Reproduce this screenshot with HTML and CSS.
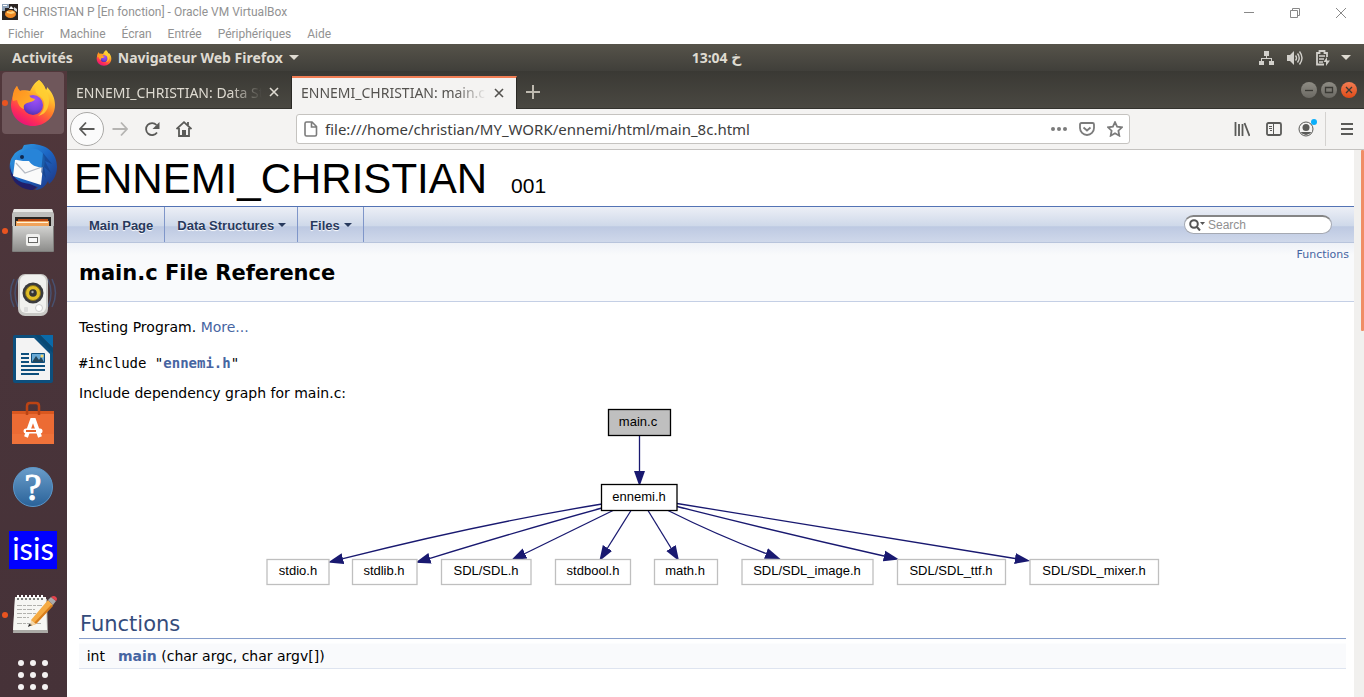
FILE: index.html
```html
<!DOCTYPE html>
<html lang="fr">
<head>
<meta charset="utf-8">
<title>CHRISTIAN P [En fonction] - Oracle VM VirtualBox</title>
<link rel="stylesheet" href="styles.css">
</head>
<body>
<svg class="defs" width="0" height="0" aria-hidden="true">
  <defs>
    <linearGradient id="ffBody" x1="0.85" y1="0" x2="0.3" y2="1">
      <stop offset="0" stop-color="#fff14a"/><stop offset="0.3" stop-color="#ffc02e"/><stop offset="0.55" stop-color="#ff7a2a"/><stop offset="0.8" stop-color="#ff2f55"/><stop offset="1" stop-color="#e5127c"/>
    </linearGradient>
    <radialGradient id="ffGlobe" cx="0.6" cy="0.2" r="0.9">
      <stop offset="0" stop-color="#a050f5"/><stop offset="0.6" stop-color="#7542dd"/><stop offset="1" stop-color="#4b2b9c"/>
    </radialGradient>
    <linearGradient id="ffHead" x1="0" y1="0" x2="1" y2="1">
      <stop offset="0" stop-color="#ff8a1e"/><stop offset="1" stop-color="#ffb52a"/>
    </linearGradient>
    <symbol id="firefox" viewBox="0 0 48 48">
      <path fill="url(#ffBody)" d="M30 1c5 4 6 8 7 10 1-1 1-2 1-3 5 5 8 11 8 18 0 12-10 21-22 21S2 38 2 26c0-5 2-9 3-12 0-2 1-5 3-7 1 3 2 4 3 5 3-1 7-1 10 0 2-4 5-9 9-11z"/>
      <circle cx="24" cy="26" r="10" fill="url(#ffGlobe)"/>
      <path fill="url(#ffHead)" d="M8 7c1 3 2 4 3 5 4-1 7 0 9 2 0 3 1 5 6 6-1 3-6 3-8 4-3 1-4 3-3 6-4-1-6-5-7-9l-4 1c-1-4 0-11 4-15z"/>
      <path fill="#ffcf32" d="M30 1c5 4 6 8 7 10 3 5 4 11 2 17-2 6-6 8-10 9 5-4 7-9 6-14-1-4-4-6-7-8-3-4-2-10 2-14z" opacity=".85"/>
    </symbol>
  </defs>
</svg>

<header class="host">
  <div class="host-title">
    <svg class="host-icon" viewBox="0 0 16 16" aria-hidden="true"><rect width="16" height="16" fill="#2a2421"/><path fill="#8fa2b8" d="M0 0h7v4H3v3H0z"/><path fill="#fff" d="M1 1h4v1H1zM7 5l2-3 3 3z"/><ellipse cx="8.500" cy="10" rx="5.500" ry="4" fill="#f08a24"/><path fill="#ffd27a" d="M5 7l3 1 3-1 2 2-4 1-4-1z"/><path fill="#d9dce0" d="M12 3l3 2v3l-3-2z"/></svg>
    <span class="host-name">CHRISTIAN P [En fonction] - Oracle VM VirtualBox</span>
    <div class="host-controls">
      <button aria-label="Réduire"><svg viewBox="0 0 12 12"><path d="M1 5.500h10"/></svg></button>
      <button aria-label="Restaurer"><svg viewBox="0 0 12 12"><path d="M1.500 3.500h7v7h-7zM3.500 3V1.500h7v7H9"/></svg></button>
      <button aria-label="Fermer"><svg viewBox="0 0 12 12"><path d="M1 1l10 10M11 1L1 11"/></svg></button>
    </div>
  </div>
  <nav class="host-menu">
    <button>Fichier</button><button>Machine</button><button>Écran</button><button>Entrée</button><button>Périphériques</button><button>Aide</button>
  </nav>
</header>

<div class="panel">
  <div class="panel-left">
    <button>Activités</button>
    <button class="app-menu"><svg class="app-icon" aria-hidden="true"><use href="#firefox"/></svg>Navigateur Web Firefox<i class="caret"></i></button>
  </div>
  <button class="clock">13:04 <span dir="rtl">خ</span></button>
  <button class="status" aria-label="Système">
    <svg width="16" height="16" viewBox="0 0 16 16"><path fill="#d2d0cb" d="M5 1h5v5H5zM0 11h5v4H0zM10 11h5v4h-5zM7 6h1v2h5v3h-1V9H3v2H2V8h5z"/></svg>
    <svg width="16" height="16" viewBox="0 0 16 16"><path fill="#d2d0cb" d="M0 5h3l4-4v14l-4-4H0z"/><path fill="none" stroke="#d2d0cb" stroke-width="1.400" d="M8.500 5.500q2 2.500 0 5M10.500 3.500q3.500 4.500 0 9M12.500 1.500q5 6.500 0 13"/></svg>
    <svg width="16" height="16" viewBox="0 0 16 16"><path fill="none" stroke="#d2d0cb" stroke-width="1.800" d="M9 14.500H2V3h2.500V1h5v2H12v4"/><path stroke="#d2d0cb" stroke-width="1.500" d="M4 6h6M4 9h5M4 12h4"/><path fill="#d2d0cb" d="M12 7l-3.500 5H11v4l4-5.500h-3z"/></svg>
    <i class="caret"></i>
  </button>
</div>

<div class="desktop">
  <nav class="dock" aria-label="Applications">
    <button class="active running" aria-label="Firefox"><svg viewBox="0 0 48 48"><use href="#firefox"/></svg></button>
    <button aria-label="Thunderbird"><svg viewBox="0 0 48 48">
      <defs><linearGradient id="tb" x1="0" y1="0" x2="1" y2="1"><stop offset="0" stop-color="#35a6e8"/><stop offset=".5" stop-color="#1c66c4"/><stop offset="1" stop-color="#20307c"/></linearGradient></defs>
      <path fill="url(#tb)" d="M15 2l7-1C38 1 48 10 48 24c0 8-4 14-8 17l-1-3c-2 5-7 9-13 9l3-3C20 46 10 44 5 37 0 31-1 19 4 13c2-4 6-6 9-7z"/>
      <path fill="#211f69" d="M1 21c0 12 8 19 20 20l7 3-4 3C10 47-1 36 1 21z"/>
      <path fill="#fafafa" d="M6 17l20-2 8 9-2 18L4 33z"/>
      <path fill="none" stroke="#b5bac3" stroke-width="1.200" d="M7 20l9 10 17-6"/>
      <path fill="#2784d8" d="M8 17c2-9 14-15 23-9 6 4 5 10 4 16-6 1-12-1-15-6-4 0-8 0-12-1z"/>
      <path fill="#123c82" d="M34 10l9 11-7-3 6 12-7-6 2 11-5-6z" opacity=".55"/><circle cx="13" cy="14" r="2" fill="#10294e"/>
    </svg></button>
    <button class="running" aria-label="Fichiers"><svg viewBox="0 0 48 48">
      <defs><linearGradient id="cab" x2="0" y2="1"><stop offset="0" stop-color="#d2d2d0"/><stop offset="1" stop-color="#8d8d8b"/></linearGradient></defs>
      <path fill="#bebebc" d="M5 2h38l2 5v37H3V7z"/><path fill="#e8e8e6" d="M5 2h38l1 3H4z"/><path fill="#292522" d="M6 10h36v9H6z"/><path fill="#b84a16" d="M9 12h30v3H9z"/><path fill="#f1a35a" d="M7 14h33v5H7z"/><path fill="#fff2d8" d="M8 15h31v1H8z"/><path fill="url(#cab)" d="M4 19h40v25H4z"/><path fill="none" stroke="#7e7e7c" d="M3.500 19v25.500h41V19"/><rect x="17" y="27" width="14" height="12" rx="2" fill="#f0f0ee"/><rect x="19.500" y="30.500" width="9" height="5" fill="#f8f8f8" stroke="#686866"/>
    </svg></button>
    <button aria-label="Rhythmbox"><svg viewBox="0 0 48 48">
      <path fill="none" stroke="#46618e" stroke-width="1.500" opacity=".65" d="M9 8q-6 14 0 28M5 8q-7 14 0 28M39 8q6 14 0 28M43 8q7 14 0 28"/>
      <rect x="9" y="3" width="30" height="42" rx="7" fill="#c9c9c6"/><rect x="11" y="4" width="26" height="38" rx="6" fill="#f1f1ef"/><circle cx="24" cy="22" r="10.500" fill="#3b3b3e"/><circle cx="24" cy="22" r="7.500" fill="#e2be26" stroke="#84701a"/><circle cx="24" cy="22" r="3.800" fill="#353535"/><circle cx="23.500" cy="21" r="1.200" fill="#aaa"/><circle cx="30" cy="37" r="3.500" fill="#fff" stroke="#ccc"/><rect x="15" y="36" width="4" height="5" rx="1" fill="#ddd"/>
    </svg></button>
    <button aria-label="LibreOffice Writer"><svg viewBox="0 0 48 48">
      <path fill="#0d4f7d" d="M6 0h21l17 17v29q0 2-2 2H6q-2 0-2-2V2q0-2 2-2z"/><path fill="#f3f3f3" d="M7 3h18l16 16v26H7z"/><path fill="#0a6aa9" d="M31 0h13v13z"/><path fill="#074975" d="M31 0l13 13v5L26 0z"/><path stroke="#0d4f7d" stroke-width="2" d="M12 19h8M12 23h8M12 27h8M12 31h24M12 35h24M12 39h18"/><path fill="#69a9d4" stroke="#0d4f7d" d="M22.500 18.500h13v9h-13z"/><path fill="#25475c" d="M23 27l4-6 3 4 2-3 3 5z"/><circle cx="33" cy="21" r="1.500" fill="#f6d564"/>
    </svg></button>
    <button aria-label="Logiciels Ubuntu"><svg viewBox="0 0 48 48">
      <path fill="#ec6b34" d="M3 12h42v33H3z"/><path fill="#d9571f" d="M3 12h42v3H3z"/><path fill="#f2793f" d="M3 35h42v10H3z" opacity=".5"/><path fill="none" stroke="#bb4314" stroke-width="2.500" d="M18 16V7q0-3 3-3h6q3 0 3 3v9"/><path fill="none" stroke="#fff" stroke-width="4" d="M17 38l6-17h2l6 17"/><path stroke="#fff" stroke-width="5" stroke-linecap="round" d="M17 32h14"/><path stroke="#e4632d" stroke-width="2" d="M17 32h10"/>
    </svg></button>
    <button aria-label="Aide"><svg viewBox="0 0 48 48">
      <defs><linearGradient id="help" x2="0" y2="1"><stop offset="0" stop-color="#6a9dca"/><stop offset="1" stop-color="#2a6299"/></linearGradient></defs>
      <circle cx="24" cy="24" r="19.500" fill="url(#help)" stroke="#5b97ca"/><text class="help-mark" x="24" y="37" text-anchor="middle">?</text>
    </svg></button>
    <button aria-label="ISIS"><svg viewBox="0 0 48 48"><path fill="#00f" d="M0 4h48v38H0z"/><text class="isis-mark" x="24" y="33" text-anchor="middle">isis</text></svg></button>
    <button class="running" aria-label="Éditeur de texte"><svg viewBox="0 0 48 48">
      <path fill="#aaa9a5" d="M6 8h32l1 34H4z"/><path fill="#f6f6f3" d="M6 6h31l1 33H4z"/><path stroke="#b1b1ad" stroke-width="1" stroke-dasharray="5 1 3 1" d="M8 14.500h25M8 18.500h18M8 22.500h20M8 26.500h12M8 32.500h24"/><path stroke="#4d4d4b" stroke-width="1.500" stroke-dasharray="2 2" d="M8 8h28"/><path stroke="#fff" stroke-width="3" stroke-dasharray="2 2" d="M8 5.500h28"/><path fill="#f5ab43" d="M22 29L39 9l5 5-17 19-5 2z"/><path fill="#d67c1c" d="M25 32l17-18 2 1-17 18z"/><path fill="#f2d6aa" d="M22 29l5 4-6 2z"/><path fill="#222" d="M20 33l3 1-4 2z"/><path fill="#aaa" d="M39 9l3-3 5 4-3 4z"/><path fill="#e3434c" d="M42 6q3-2 5 0t0 4z"/>
    </svg></button>
    <button class="apps" aria-label="Afficher les applications"><svg viewBox="0 0 48 48"><g fill="#f4f1f2"><circle cx="12" cy="12" r="3"/><circle cx="24" cy="12" r="3"/><circle cx="36" cy="12" r="3"/><circle cx="12" cy="24" r="3"/><circle cx="24" cy="24" r="3"/><circle cx="36" cy="24" r="3"/><circle cx="12" cy="36" r="3"/><circle cx="24" cy="36" r="3"/><circle cx="36" cy="36" r="3"/></g></svg></button>
  </nav>

  <main class="browser">
    <div class="tabs">
      <div class="tab"><button class="tab-label">ENNEMI_CHRISTIAN: Data Structures</button><button class="tab-close" aria-label="Fermer l’onglet"><svg viewBox="0 0 10 10"><path d="M1 1l8 8M9 1L1 9"/></svg></button></div>
      <div class="tab selected"><button class="tab-label">ENNEMI_CHRISTIAN: main.c File Reference</button><button class="tab-close" aria-label="Fermer l’onglet"><svg viewBox="0 0 10 10"><path d="M1 1l8 8M9 1L1 9"/></svg></button></div>
      <button class="new-tab" aria-label="Nouvel onglet"><svg viewBox="0 0 14 14"><path d="M7 0v14M0 7h14"/></svg></button>
      <div class="window-controls">
        <button aria-label="Réduire"><svg viewBox="0 0 16 16"><path d="M4 8.500h8"/></svg></button>
        <button aria-label="Agrandir"><svg viewBox="0 0 16 16"><path d="M4.500 5.500h7v5h-7z"/></svg></button>
        <button class="close" aria-label="Fermer"><svg viewBox="0 0 16 16"><path d="M5 5l6 6M11 5l-6 6"/></svg></button>
      </div>
    </div>

    <div class="toolbar">
      <div class="tools history">
        <button class="back" aria-label="Précédent"><svg viewBox="0 0 16 16"><path d="M15.500 8H1M7 1.500L1 8l6 6.500"/></svg></button>
        <button class="forward" aria-label="Suivant"><svg viewBox="0 0 16 16"><path d="M0.500 8H15M9 1.500L15 8l-6 6.500"/></svg></button>
        <button aria-label="Actualiser"><svg viewBox="0 0 16 16"><path d="M13 11.500A6 6 0 1 1 12.500 4"/><path class="solid" d="M15.500 1v7h-7z"/></svg></button>
        <button aria-label="Accueil"><svg viewBox="0 0 16 16"><path d="M0.500 8L8 1.200 15.500 8M3 7v8h10V7M12 1v3"/><path class="solid" d="M6 9h4v6H6z"/></svg></button>
      </div>
      <div class="address">
        <svg class="page-icon" viewBox="0 0 16 16" aria-hidden="true"><path d="M3.500 1h5.500l4.500 4.500v8q0 1.500-1.500 1.500H3.500Q2 15 2 13.500v-11Q2 1 3.500 1zM8.500 1v5h5"/></svg>
        <input aria-label="Adresse" value="file:///home/christian/MY_WORK/ennemi/html/main_8c.html">
        <button aria-label="Actions"><svg viewBox="0 0 16 16"><g class="solid"><circle cx="2" cy="8" r="2"/><circle cx="8" cy="8" r="2"/><circle cx="14" cy="8" r="2"/></g></svg></button>
        <button aria-label="Pocket"><svg viewBox="0 0 16 16"><path d="M2.500 2h11Q15 2 15 3.500V7a7 7 0 0 1-14 0V3.500Q1 2 2.500 2zM4.500 6.500L8 9.500l3.500-3"/></svg></button>
        <button aria-label="Marque-page"><svg viewBox="0 0 16 16"><path d="M8 1.200l2.100 4.500 4.900.6-3.600 3.400.9 5L8 12.300l-4.300 2.400.9-5L1 6.300l4.900-.6z"/></svg></button>
      </div>
      <div class="tools extras">
        <button aria-label="Bibliothèque"><svg viewBox="0 0 16 16"><path d="M1.500 1v14M5 3v12M8.500 3v12M10.500 2l5 13"/></svg></button>
        <button aria-label="Panneaux"><svg viewBox="0 0 16 16"><path d="M2.500 2h11Q15 2 15 3.500v9q0 1.500-1.500 1.500h-11Q1 14 1 12.500v-9Q1 2 2.500 2z"/><path class="thin" d="M7.500 2v12M3 5.500h3M3 7.500h3M4 9.500h2"/></svg></button>
        <button class="account" aria-label="Compte"><svg viewBox="0 0 16 16"><circle class="thin" cx="8" cy="8" r="7"/><circle class="solid" cx="8" cy="6.500" r="3.500"/><path class="solid" d="M2.500 11h11Q11 14 8 14t-5.500-3z"/></svg></button>
      </div>
      <button class="hamburger" aria-label="Menu"><svg viewBox="0 0 16 16"><path d="M2 3h12M2 8h12M2 13h12"/></svg></button>
    </div>

    <div class="viewport">
      <article class="doc">
        <div class="project"><span class="project-name">ENNEMI_CHRISTIAN</span><span class="project-number">001</span></div>
        <nav class="doc-nav">
          <a href="#main">Main Page</a><a href="#data">Data Structures<i class="caret"></i></a><a href="#files">Files<i class="caret"></i></a>
          <label class="search"><svg viewBox="0 0 16 12" aria-hidden="true"><circle cx="5" cy="5" r="3.800"/><path d="M8 8l3 3.500"/><path class="tip" d="M11 3h5l-2.500 3z"/></svg><input type="text" placeholder="Search" aria-label="Search"></label>
        </nav>
        <header class="doc-head">
          <a class="summary" href="#functions">Functions</a>
          <h1>main.c File Reference</h1>
        </header>
        <section class="contents">
          <p class="brief">Testing Program. <a href="#details">More...</a></p>
          <code class="include">#include "<a href="#ennemi">ennemi.h</a>"</code>
          <p class="caption">Include dependency graph for main.c:</p>
          <svg class="graph" width="901" height="182" viewBox="0 0 901 182" role="img" aria-label="Include dependency graph">
            <defs><marker id="arrow" markerUnits="userSpaceOnUse" markerWidth="16" markerHeight="12" refX="0" refY="6" orient="auto"><path fill="#191970" d="M0 .5L15.500 6 0 11.500z"/></marker></defs>
            <g class="edges">
              <path d="M377.500 30v35"/>
              <path d="M340 98Q218 118 81 152.700"/>
              <path d="M340 102Q267 122 168 152.300"/>
              <path d="M351 104.500L263 147.500"/>
              <path d="M369 104.500L345.500 142"/>
              <path d="M386 104.500L409 142"/>
              <path d="M406 104.500Q455 129 504 147.500"/>
              <path d="M415 100.500Q520 127 622 150"/>
              <path d="M415 97.500Q590 126 753 152.500"/>
            </g>
            <g class="nodes">
              <rect class="root" x="346.500" y="3.500" width="62" height="26"/><rect class="linked" x="339.500" y="78.500" width="75.500" height="26"/>
              <rect x="5" y="153.500" width="62" height="25"/><rect x="90.500" y="153.500" width="64.500" height="25"/><rect x="179.500" y="153.500" width="89.500" height="25"/><rect x="293.500" y="153.500" width="75" height="25"/><rect x="392.500" y="153.500" width="63" height="25"/><rect x="480" y="153.500" width="131" height="25"/><rect x="635.500" y="153.500" width="108" height="25"/><rect x="768" y="153.500" width="128.500" height="25"/>
            </g>
            <g class="labels">
              <text x="376" y="20">main.c</text><text x="377" y="95">ennemi.h</text>
              <text x="36" y="169">stdio.h</text><text x="122" y="169">stdlib.h</text><text x="224" y="169">SDL/SDL.h</text><text x="331" y="169">stdbool.h</text><text x="423" y="169">math.h</text><text x="545" y="169">SDL/SDL_image.h</text><text x="689" y="169">SDL/SDL_ttf.h</text><text x="832" y="169">SDL/SDL_mixer.h</text>
            </g>
          </svg>
          <table class="members" id="functions">
            <thead><tr><th colspan="2"><h2>Functions</h2></th></tr></thead>
            <tbody><tr><td class="type">int</td><td><a href="#main">main</a> (char argc, char argv[])</td></tr></tbody>
          </table>
        </section>
      </article>
      <div class="scrollbar"><div class="thumb"></div></div>
    </div>
  </main>
</div>
</body>
</html>
```
FILE: styles.css
```css
* { box-sizing: border-box; }
html, body { height: 100%; }
body { margin: 0; display: flex; flex-direction: column; overflow: hidden; background: #fff; font-family: "Noto Sans", "DejaVu Sans", sans-serif; }
button { border: 0; padding: 0; margin: 0; background: none; color: inherit; font: inherit; }
input { border: 0; padding: 0; background: none; font: inherit; outline: 0; min-width: 0; }
a { color: #4665a2; text-decoration: none; }
.defs { position: absolute; }
.caret { display: inline-block; border: 5px solid transparent; border-top-color: currentColor; border-bottom: 0; }

/* Host window */
.host { color: #929292; font: 12px/22px "Roboto", sans-serif; height: 44px; flex: none; }
.host-title { display: flex; align-items: center; height: 23px; padding: 0 17px 0 2px; gap: 5px; }
.host-icon { width: 16px; height: 16px; }
.host-controls { margin-left: auto; display: flex; gap: 34px; }
.host-controls button { width: 12px; height: 20px; }
.host-controls svg { display: block; width: 12px; height: 12px; margin-top: 3px; fill: none; stroke: #888; }
.host-menu { display: flex; gap: 16px; padding-left: 8px; }

/* GNOME panel */
.panel { display: grid; grid-template-columns: 1fr auto 1fr; align-items: center; flex: none; height: 27px; padding: 0 13px 0 12px; background: linear-gradient(#56534a, #403f3a); color: #dfdbd2; font-size: 14px; font-weight: 700; }
.panel-left { display: flex; gap: 23px; }
.app-menu { display: flex; align-items: center; gap: 6px; }
.app-icon { width: 16px; height: 16px; }
.clock { padding-left: 70px; }
.status { display: flex; align-items: center; justify-content: flex-end; gap: 12px; }
.status .caret { margin-left: -2px; }

.desktop { display: flex; flex: 1; min-height: 0; }

/* Dock */
.dock { flex: none; width: 67px; padding: 1px 3px 0 2px; display: flex; flex-direction: column; gap: 2px; overflow: hidden; background: linear-gradient(#51373b, #49343a 45%, #463238); }
.dock button { position: relative; flex: none; height: 62px; border-radius: 4px; }
.dock svg { display: block; width: 48px; height: 48px; margin: 0 auto; }
.dock .active { background: #6f575b; }
.dock .running::before { content: ""; position: absolute; left: 0; top: 28px; width: 6px; height: 6px; border-radius: 50%; background: #e95420; }
.dock .apps { height: 54px; }
.help-mark { font: 38px "Liberation Serif", serif; fill: #fff; stroke: #fff; }
.isis-mark { font: 31px "Lato", sans-serif; fill: #fff; }

/* Browser chrome */
.browser { flex: 1; min-width: 0; display: flex; flex-direction: column; }
.tabs { flex: none; display: flex; height: 38px; padding-top: 5px; border-bottom: 1px solid #33322e; background: linear-gradient(#3a3934, #4a4842); color: #dfdbd2; font-size: 14px; }
.tab { display: flex; align-items: center; width: 225px; padding: 0 12px 0 9px; border-right: 1px solid #292824; }
.tab-label { flex: 1; overflow: hidden; white-space: nowrap; text-align: left; mask-image: linear-gradient(90deg, #000 calc(100% - 32px), transparent); }
.tab-close { margin-left: 7px; display: flex; }
.tab-close svg { width: 10px; height: 10px; stroke: currentColor; stroke-width: 1.600; }
.tab.selected { background: #f4f3f2; color: #54524f; border-top: 2px solid #f27e55; margin-bottom: -1px; padding-bottom: 2px; }
.new-tab { margin-left: 9px; display: flex; align-items: center; }
.new-tab svg { width: 14px; height: 14px; stroke: #bfbab0; stroke-width: 2; }
.window-controls { display: flex; gap: 4px; margin-left: auto; padding: 6px 7px 0 0; }
.window-controls button { width: 16px; height: 16px; border-radius: 50%; background: linear-gradient(#8e8c84, #6b6963); }
.window-controls .close { background: linear-gradient(#f37d53, #df4b18); }
.window-controls svg { display: block; width: 16px; height: 16px; fill: none; stroke: #3a3934; stroke-width: 1.300; }

.toolbar { flex: none; display: flex; align-items: center; height: 41px; background: #f4f3f2; border-bottom: 1px solid #c4c2c0; }
.toolbar svg { display: block; width: 16px; height: 16px; fill: none; stroke: #5a5a58; stroke-width: 1.800; }
.toolbar .solid { fill: #5a5a58; stroke: none; }
.toolbar .thin { stroke-width: 1; }
.tools { display: flex; align-items: center; gap: 16px; }
.history { padding-left: 3px; }
.toolbar .back { width: 34px; height: 34px; padding: 8px; border: 1px solid #aaa9a7; border-radius: 50%; background: #fbfbfb; margin-right: -8px; }
.toolbar .forward svg { stroke: #b5b4b2; }
.address { flex: 1; display: flex; align-items: center; gap: 12px; height: 30px; margin: 0 104px; padding: 0 6px; border: 1px solid #c5c3c0; border-radius: 3px; background: #fff; }
.address input { flex: 1; margin-left: -6px; font-size: 15px; color: #3d3d3d; }
.address svg { stroke: #7b7b7b; }
.address .solid { fill: #7b7b7b; }
.address .page-icon { stroke-width: 1.600; }
.account { position: relative; }
.account::after { content: ""; position: absolute; right: -3px; top: -2px; width: 6px; height: 6px; border-radius: 50%; background: #0aaefa; }
.hamburger { height: 34px; margin-left: 11px; padding: 0 9px 0 13px; border-left: 1px solid #d4d2d0; }

/* Documentation page */
.viewport { flex: 1; min-height: 0; display: flex; }
.doc { flex: 1; min-width: 0; overflow: hidden; color: #000; font: 14px/22px "DejaVu Sans", sans-serif; }
.scrollbar { width: 10px; background: #f1f0ee; padding-left: 7px; }
.thumb { height: 33%; background: #f08d66; border-radius: 1px; }
.project { display: flex; align-items: baseline; gap: 24px; height: 56px; padding: 5px 7px 0; font-family: "Liberation Sans", sans-serif; }
.project-name { font-size: 42px; line-height: 48px; }
.project-number { font-size: 21px; }
.doc-nav { display: flex; height: 37px; padding: 0 22px 0 10px; border-top: 1px solid #5373b4; border-bottom: 1px solid #b8c4dc; background: linear-gradient(#eceff6, #ced8e9 55%, #bdc9e2 56%, #cfd8ea); }
.doc-nav a { display: flex; align-items: center; gap: 4px; padding: 1px 11px 0 12px; border-right: 1px solid #7f96c9; color: #283a5d; font: 700 13px "Liberation Sans", sans-serif; text-shadow: 0 1px 1px #fff; }
.doc-nav .caret { border-width: 4px; border-bottom: 0; }
.search { display: flex; align-items: center; gap: 3px; width: 148px; height: 19px; margin: 8px 0 0 auto; padding: 0 4px; border: 1px solid #a5a9b2; border-top: 2px solid #858585; border-radius: 10px; background: #fff; }
.search svg { flex: none; width: 16px; height: 12px; fill: none; stroke: #555; stroke-width: 2; }
.search .tip { fill: #555; stroke: none; }
.search input { width: 100%; height: 16px; font: 12px "Liberation Sans", sans-serif; }
.search input::placeholder { color: #909090; opacity: 1; }
.doc-head { position: relative; height: 59px; padding: 19px 12px 0; background: linear-gradient(#eef1f7, #f9fafc 12px); border-bottom: 1px solid #c4cfe5; }
.doc-head h1 { margin: 0; font-size: 21px; line-height: 22px; }
.summary { position: absolute; right: 5px; top: 1px; font-size: 11px; }
.contents { padding: 14px 8px 0 12px; }
.contents p { margin: 0; }
.include { display: block; margin: 14px 0 8px; font: 14px/22px "DejaVu Sans Mono", monospace; }
.include a, .members a { font-weight: 700; }
.graph { display: block; margin: 2px auto 0; }
.edges path { fill: none; stroke: #191970; stroke-width: 1.300; marker-end: url(#arrow); }
.nodes rect { fill: #fff; stroke: #bfbfbf; stroke-width: 1.300; }
.nodes .root { fill: #bfbfbf; stroke: #000; }
.nodes .linked { stroke: #000; }
.labels text { text-anchor: middle; font: 13px "Liberation Sans", sans-serif; }
.members { width: 100%; border-collapse: collapse; margin-top: 23px; }
.members th { padding: 0 0 1px 1px; text-align: left; border-bottom: 1px solid #879ecb; }
.members h2 { margin: 0; color: #354c7b; font-size: 21px; line-height: 26px; font-weight: 400; }
.members tbody td { padding: 6px 0 1px; background: linear-gradient(#fff 4px, #f9fafc 4px); border-bottom: 1px solid #dee4f0; }
.members .type { width: 39px; padding-right: 13px; text-align: right; }
```
